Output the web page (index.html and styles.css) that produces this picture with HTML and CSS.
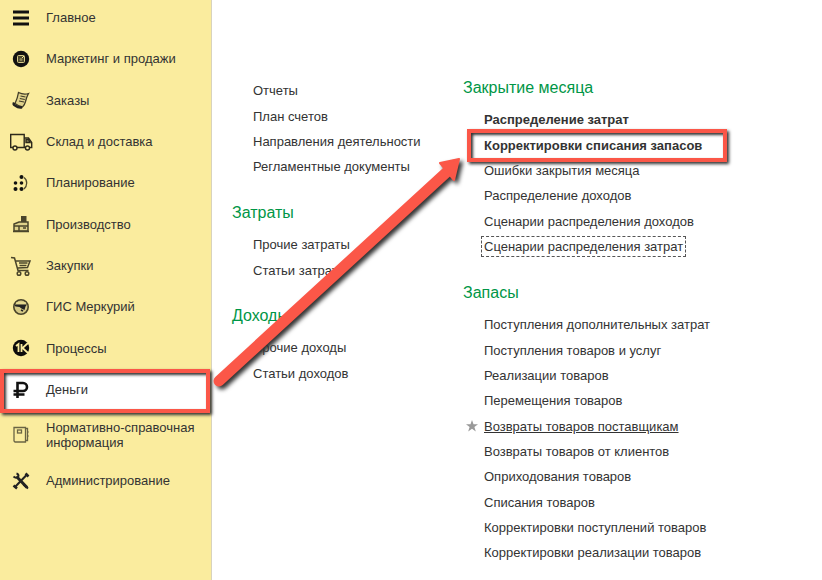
FILE: index.html
```html
<!DOCTYPE html>
<html lang="ru">
<head>
<meta charset="utf-8">
<title>Деньги</title>
<link rel="stylesheet" href="styles.css">
</head>
<body>
<div class="app">
  <nav class="sidebar">
    <a class="item" href="#"><svg class="icon" viewBox="0 0 24 24"><path d="M4 6h16M4 12h16M4 18h16" stroke="#111" stroke-width="3"/></svg><span>Главное</span></a>
    <a class="item" href="#"><svg class="icon" viewBox="0 0 24 24"><circle cx="12" cy="12" r="8.200" fill="#111"/><rect x="8.500" y="8.500" width="7" height="7" rx="1" fill="#4b472e" stroke="#d8cc88"/><circle cx="12" cy="12.500" r="1.500" fill="#8d865c"/><path d="M13 11l2-2" stroke="#f4e89b"/></svg><span>Маркетинг и продажи</span></a>
    <a class="item" href="#"><svg class="icon" viewBox="0 0 24 24"><path d="M9.500 4.500q5 2.500 10 1-2 3.500-3 8-1 4-3 5.500-3.500-.5-7.500-3.500 2.500-5 3.500-11z" fill="#e0d38b" stroke="#403c28" stroke-width="1.300"/><path d="M5 14.500q-1 2 1 3 3.500 2.500 7 1.800" fill="none" stroke="#222" stroke-width="2.400"/><path d="M11.500 8l5 1M10.800 10.500l5 1M10 13l5 1" stroke="#403c28" stroke-width="1.200"/></svg><span>Заказы</span></a>
    <a class="item" href="#"><svg class="icon" viewBox="0 0 24 24"><g fill="none" stroke="#2c291b" stroke-width="1.400"><path d="M4 17.500H1.700V4.500h13.500v13M15 8h4.500l3.200 4.500v5H21M8 17.500h8"/><path d="M17 9.500h2.500l1.500 3h-4z" fill="#8d865c"/><circle cx="6" cy="18" r="2"/><circle cx="18.500" cy="18" r="2"/></g></svg><span>Склад и доставка</span></a>
    <a class="item" href="#"><svg class="icon" viewBox="0 0 24 24"><g fill="#111"><circle cx="12.500" cy="6" r="2"/><circle cx="6.500" cy="12" r="1.800"/><circle cx="12.500" cy="12" r="1.800"/><circle cx="6.500" cy="18" r="2"/><circle cx="12.500" cy="18" r="2"/></g><path d="M15 6.500q2.700 2 2.700 5.500t-2.700 6" fill="none" stroke="#514c30" stroke-width="1.300"/></svg><span>Планирование</span></a>
    <a class="item" href="#"><svg class="icon" viewBox="0 0 24 24"><path d="M12 4h5.500v6H12z" fill="#4a452b"/><path d="M5 19V12l5-2h9v9z" fill="#ded28a" stroke="#4a452b" stroke-width="1.500"/><path d="M5 14h14M10 14v5M14 16h3M4 19.500h16" stroke="#4a452b" stroke-width="1.500"/></svg><span>Производство</span></a>
    <a class="item" href="#"><svg class="icon" viewBox="0 0 24 24"><g fill="none" stroke="#4a452b" stroke-width="1.500"><path d="M2 3.500l3.500.500 3.500 12.500h10.500M6.500 7h14.500l-2.500 6.500-10 .5M10 9h8.500M10.500 11.500h7"/><circle cx="10" cy="19.500" r="1.800"/><circle cx="18" cy="19.500" r="1.800"/></g></svg><span>Закупки</span></a>
    <a class="item" href="#"><svg class="icon" viewBox="0 0 24 24"><circle cx="12" cy="12" r="7.200" fill="#d5c985" stroke="#4a452b" stroke-width="1.600"/><path d="M5 9.500h13l-1.500 2-1 3.500-3-1.500-2-1.500-4-.5z" fill="#222"/><path d="M7 8h10" stroke="#f4e89b"/><path d="M12 15l2 1" stroke="#222" stroke-width="1.500"/></svg><span>ГИС Меркурий</span></a>
    <a class="item" href="#"><svg class="icon" viewBox="0 0 24 24"><circle cx="12" cy="12" r="8.200" fill="#0c0c0c"/><path d="M7 10l2.500-2v8M12.500 8v8M19 7L13.500 12l5.500 5" fill="none" stroke="#faec9e" stroke-width="1.800"/></svg><span>Процессы</span></a>
    <a class="item current" href="#" aria-current="page"><svg class="icon" viewBox="0 0 24 24"><path d="M8.500 20V5h5.500a4 4 0 0 1 0 8H4.500M4.500 16.500h11" fill="none" stroke="#111" stroke-width="2.600"/></svg><span>Деньги</span></a>
    <a class="item tall" href="#"><svg class="icon" viewBox="0 0 24 24"><g fill="none" stroke="#6a6444" stroke-width="1.300"><path d="M5 4.500h11.500v14.500H6l-1-1zM16.500 5.500h2v12h-2"/><rect x="8.500" y="7" width="4" height="3"/><path d="M18.500 9h1M18.500 13h1"/></g></svg><span>Нормативно-справочная информация</span></a>
    <a class="item" href="#"><svg class="icon" viewBox="0 0 24 24"><path d="M7.500 7.500L18 18.500" stroke="#222" stroke-width="3"/><path d="M18.500 5L6 18" stroke="#222" stroke-width="2"/><path d="M4.500 7.500q3 2.500 5-.5 0-2-2-2.500M14.500 15.500l4.500 4" fill="none" stroke="#222" stroke-width="2"/><path d="M16.500 4.500l3 3M4.500 16.500l3.500 3" stroke="#222" stroke-width="2.500"/></svg><span>Администрирование</span></a>
  </nav>
  <main class="content">
    <div class="column side">
      <ul class="links">
        <li><a href="#">Отчеты</a></li>
        <li><a href="#">План счетов</a></li>
        <li><a href="#">Направления деятельности</a></li>
        <li><a href="#">Регламентные документы</a></li>
      </ul>
      <section>
        <h2>Затраты</h2>
        <ul class="links">
          <li><a href="#">Прочие затраты</a></li>
          <li><a href="#">Статьи затрат</a></li>
        </ul>
      </section>
      <section>
        <h2>Доходы</h2>
        <ul class="links">
          <li><a href="#">Прочие доходы</a></li>
          <li><a href="#">Статьи доходов</a></li>
        </ul>
      </section>
    </div>
    <div class="column">
      <section>
        <h2>Закрытие месяца</h2>
        <ul class="links">
          <li><a class="strong" href="#">Распределение затрат</a></li>
          <li><a class="strong marked" href="#">Корректировки списания запасов</a></li>
          <li><a href="#">Ошибки закрытия месяца</a></li>
          <li><a href="#">Распределение доходов</a></li>
          <li><a href="#">Сценарии распределения доходов</a></li>
          <li><a class="focused" href="#">Сценарии распределения затрат</a></li>
        </ul>
      </section>
      <section>
        <h2>Запасы</h2>
        <ul class="links">
          <li><a href="#">Поступления дополнительных затрат</a></li>
          <li><a href="#">Поступления товаров и услуг</a></li>
          <li><a href="#">Реализации товаров</a></li>
          <li><a href="#">Перемещения товаров</a></li>
          <li><a class="hovered" href="#"><svg class="star" viewBox="0 0 12 12"><path d="M6 0l1.500 4.200H12L8.400 7l1.400 4.500L6 8.800l-3.800 2.700L3.600 7 0 4.200h4.500z" fill="#999"/></svg>Возвраты товаров поставщикам</a></li>
          <li><a href="#">Возвраты товаров от клиентов</a></li>
          <li><a href="#">Оприходования товаров</a></li>
          <li><a href="#">Списания товаров</a></li>
          <li><a href="#">Корректировки поступлений товаров</a></li>
          <li><a href="#">Корректировки реализации товаров</a></li>
        </ul>
      </section>
    </div>
  </main>
  <svg class="arrow" viewBox="0 0 260 240" aria-hidden="true">
    <g fill="#fb5748" stroke="#fb5748">
      <path d="M8 231L238 20" fill="none" stroke-width="11" stroke-linecap="round"/>
      <path d="M248 9l-19 4 14 17z" stroke-width="2" stroke-linejoin="round"/>
    </g>
  </svg>
</div>
</body>
</html>
```
FILE: styles.css
```css
* {
  box-sizing: border-box;
}

body {
  margin: 0;
  background: #fff;
  color: #333;
  font: 13px/16px "Liberation Sans", Arial, sans-serif;
}

a {
  color: inherit;
  text-decoration: none;
}

.app {
  position: relative;
  display: flex;
  height: 100vh;
  overflow: hidden;
}

.sidebar {
  flex: none;
  width: 212px;
  padding-right: 1px;
  margin-top: -3px;
  background: #faec9e;
  border-right: 1px solid #d8d3bd;
}

.item {
  position: relative;
  display: flex;
  align-items: center;
  gap: 13px;
  height: 41px;
  padding-left: 9px;
  line-height: 15px;
}

.item:nth-child(3n) {
  height: 42px;
}

.item.tall {
  height: 50px;
}

.item:last-child {
  height: 41px;
}

.item.current {
  background: #fff;
}

.icon {
  flex: none;
  width: 24px;
  height: 24px;
}

.item.current::after,
.marked::after {
  content: "";
  position: absolute;
  border: 4px solid #fb5748;
  box-shadow: 2px 2px 3px #333, inset 2px 2px 3px #333;
}

.item.current::after {
  inset: 0 0 -3px 0;
}

.content {
  display: flex;
  flex: 1;
  padding: 78px 0 0 20px;
}

.column {
  flex: none;
}

.side {
  width: 231px;
}

section {
  margin-bottom: 24px;
}

.side section,
.side .links {
  margin-bottom: 23px;
}

h2 {
  margin: 0 0 9px;
  color: #009646;
  font-size: 16px;
  font-weight: 400;
  line-height: 20px;
}

.links {
  margin: 0;
  padding: 0 0 0 21px;
  list-style: none;
}

.links li {
  line-height: 25px;
}

.links li:nth-child(3n + 1) {
  line-height: 26px;
}

.links a {
  position: relative;
}

.strong {
  font-weight: 700;
}

.marked::after {
  inset: -9px -25px -9px -17px;
}

.focused {
  outline: 1px dashed #555;
  outline-offset: 2px;
}

.hovered {
  text-decoration: underline;
}

.star {
  position: absolute;
  left: -18px;
  top: 1px;
  width: 12px;
  height: 12px;
}

.arrow {
  position: absolute;
  left: 211px;
  top: 150px;
  width: 260px;
  height: 240px;
  pointer-events: none;
  filter: drop-shadow(3px 3px 2px #333);
}
```
